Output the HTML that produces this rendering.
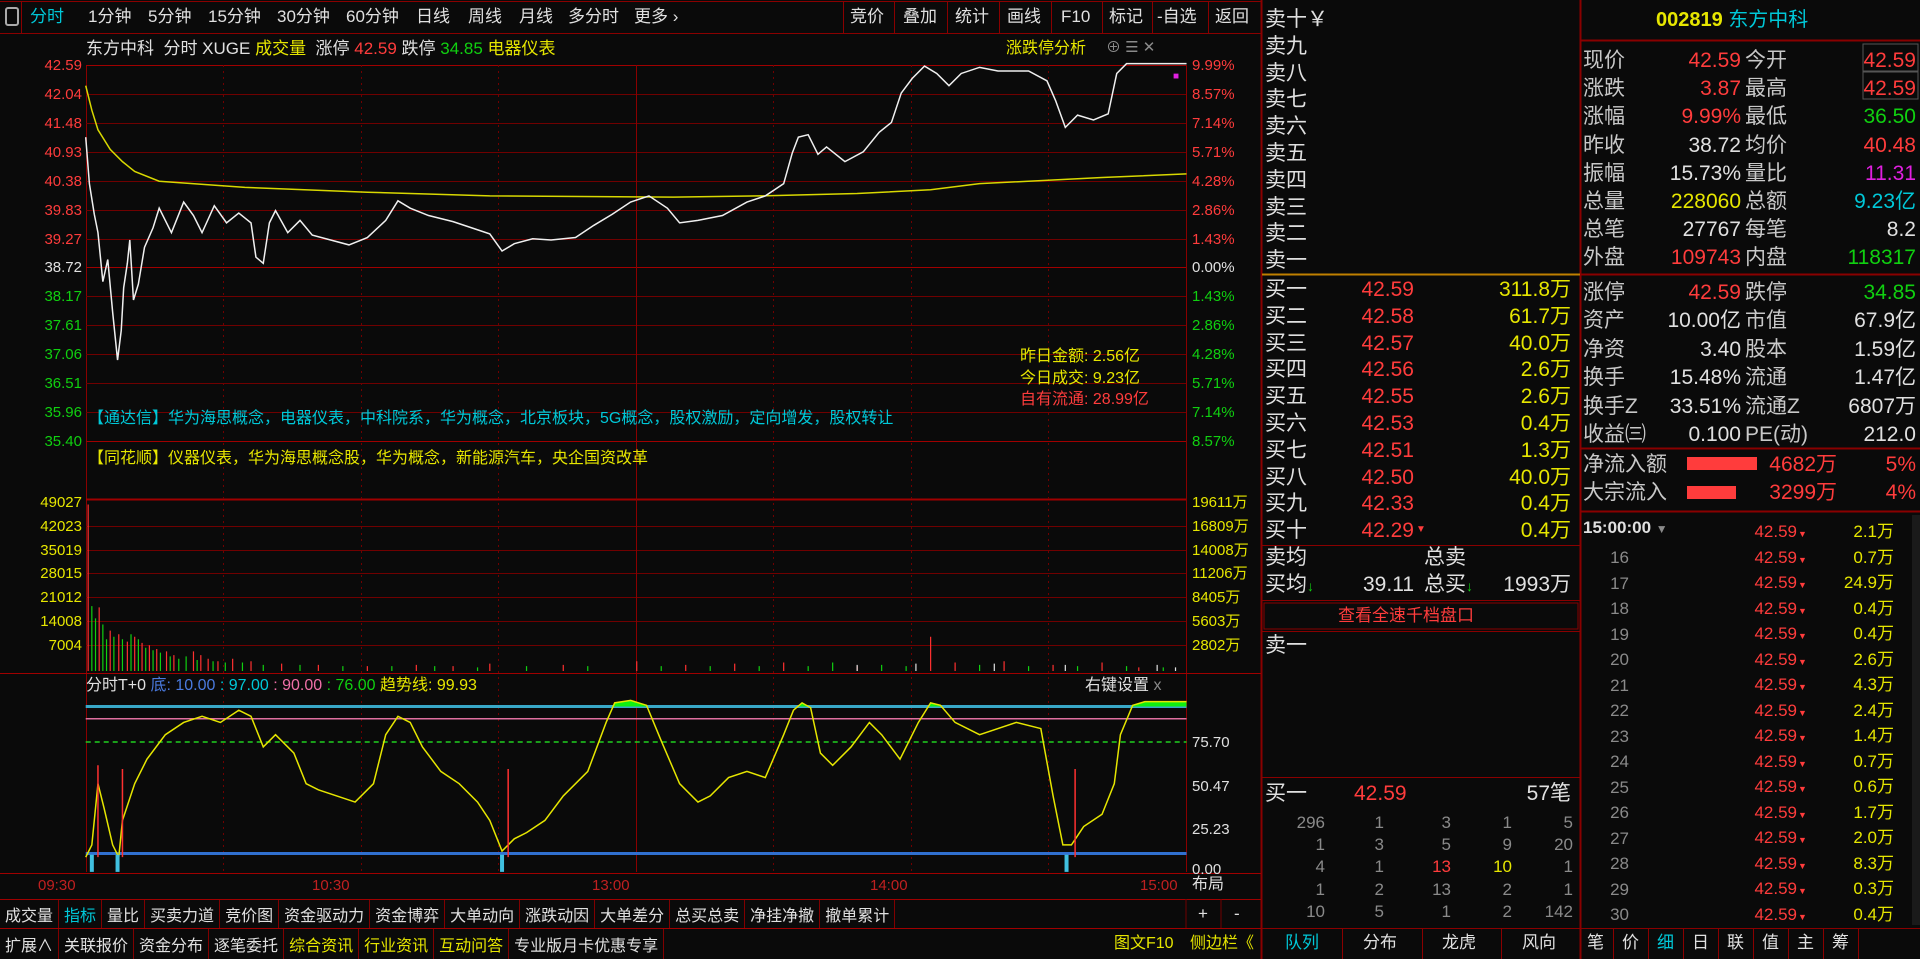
<!DOCTYPE html>
<html><head><meta charset="utf-8"><style>
*{margin:0;padding:0;box-sizing:border-box}
body{width:1920px;height:959px;background:#0a0a0a;overflow:hidden;position:relative;font-family:"Liberation Sans","WenQuanYi Zen Hei","Noto Sans CJK SC",sans-serif;color:#d8d8d8}
.a{position:absolute;white-space:nowrap;line-height:1}
.r{color:#ff3c3c}.g{color:#10d010}.y{color:#e6e600}.c{color:#00c8d8}.w{color:#e0e0e0}.gr{color:#8a8a8a}.m{color:#e020e0}
.s15{font-size:15px}.s16{font-size:16px}.s17{font-size:17px}.s21{font-size:21px}
.bar{position:absolute;display:flex;font-size:16px}
.bar div{border-right:1px solid #800000;padding:0 5px;height:100%;display:flex;align-items:center}
</style></head><body>

<svg class="a" style="left:0;top:0" width="1920" height="959">
<rect x="0" y="0" width="1261" height="33" fill="#0a0a0a"/>
<line x1="0" y1="33.5" x2="1261" y2="33.5" stroke="#8a0000"/>
<line x1="0" y1="1.5" x2="1261" y2="1.5" stroke="#8a0000"/>
<rect x="6" y="8" width="12" height="17" rx="2" fill="none" stroke="#aaa" stroke-width="2"/>
<line x1="21.5" y1="2" x2="21.5" y2="33" stroke="#8a0000"/>
<line x1="843.5" y1="2" x2="843.5" y2="33" stroke="#8a0000"/>
<line x1="894.5" y1="2" x2="894.5" y2="33" stroke="#8a0000"/>
<line x1="947.5" y1="2" x2="947.5" y2="33" stroke="#8a0000"/>
<line x1="999.5" y1="2" x2="999.5" y2="33" stroke="#8a0000"/>
<line x1="1051.5" y1="2" x2="1051.5" y2="33" stroke="#8a0000"/>
<line x1="1102.5" y1="2" x2="1102.5" y2="33" stroke="#8a0000"/>
<line x1="1152.5" y1="2" x2="1152.5" y2="33" stroke="#8a0000"/>
<line x1="1208.5" y1="2" x2="1208.5" y2="33" stroke="#8a0000"/>
<line x1="1261.5" y1="0" x2="1261.5" y2="959" stroke="#8a0000" stroke-width="2"/>
<line x1="1580.5" y1="0" x2="1580.5" y2="959" stroke="#8a0000" stroke-width="2"/>
<line x1="86.5" y1="65" x2="86.5" y2="872" stroke="#8a0000"/>
<line x1="1186.5" y1="65" x2="1186.5" y2="872" stroke="#8a0000"/>
<g stroke="#700000" stroke-width="1">
<line x1="86" y1="65.5" x2="1186" y2="65.5" stroke="#a00000"/>
<line x1="86" y1="94.5" x2="1186" y2="94.5"/><line x1="86" y1="123.5" x2="1186" y2="123.5"/>
<line x1="86" y1="152.5" x2="1186" y2="152.5"/><line x1="86" y1="181.5" x2="1186" y2="181.5"/>
<line x1="86" y1="210.5" x2="1186" y2="210.5"/><line x1="86" y1="239.5" x2="1186" y2="239.5"/>
<line x1="86" y1="267.5" x2="1186" y2="267.5" stroke="#a00000"/>
<line x1="86" y1="296.5" x2="1186" y2="296.5"/><line x1="86" y1="325.5" x2="1186" y2="325.5"/>
<line x1="86" y1="354.5" x2="1186" y2="354.5"/><line x1="86" y1="383.5" x2="1186" y2="383.5"/>
<line x1="86" y1="412.5" x2="1186" y2="412.5"/><line x1="86" y1="441.5" x2="1186" y2="441.5" stroke="#a00000"/>
<line x1="86" y1="499.5" x2="1186" y2="499.5" stroke="#a00000" stroke-width="2"/>
<line x1="86" y1="526.5" x2="1186" y2="526.5"/><line x1="86" y1="550.5" x2="1186" y2="550.5"/>
<line x1="86" y1="573.5" x2="1186" y2="573.5"/><line x1="86" y1="597.5" x2="1186" y2="597.5"/>
<line x1="86" y1="621.5" x2="1186" y2="621.5"/><line x1="86" y1="645.5" x2="1186" y2="645.5"/>
<line x1="0" y1="673.5" x2="1261" y2="673.5" stroke="#a00000"/>
<line x1="0" y1="873.5" x2="1261" y2="873.5" stroke="#a00000"/>
<line x1="0" y1="899.5" x2="1261" y2="899.5" stroke="#a00000"/>
<line x1="0" y1="928.5" x2="1261" y2="928.5" stroke="#a00000"/>
<line x1="1186" y1="899" x2="1186" y2="928"/>
<line x1="1221" y1="899" x2="1221" y2="928"/>
</g>
<g stroke="#700000" stroke-dasharray="2,4">
<line x1="223.5" y1="65" x2="223.5" y2="872"/><line x1="361.5" y1="65" x2="361.5" y2="872"/>
<line x1="498.5" y1="65" x2="498.5" y2="872"/><line x1="773.5" y1="65" x2="773.5" y2="872"/>
<line x1="911.5" y1="65" x2="911.5" y2="872"/><line x1="1048.5" y1="65" x2="1048.5" y2="872"/>
</g>
<line x1="636.5" y1="65" x2="636.5" y2="872" stroke="#8a0000"/>

<g transform="scale(1.2245)" fill="none">
<polyline vector-effect="non-scaling-stroke" stroke="#d8d800" stroke-width="1.5" points="70,70 75,90 80,106 90,122 100,132 110,140 130,148 200,153 300,157 400,160 550,161 620,160 700,158 760,155 800,150 900,145 969,142"/>
<polyline vector-effect="non-scaling-stroke" stroke="#f0f0f0" stroke-width="1.5" points="70,112 73,150 77,175 80,190 84,230 88,212 92,255 96,294 99,270 101,235 104,215 106,196 109,245 113,232 118,202 125,186 130,170 140,190 150,165 158,176 165,190 175,168 185,182 195,174 205,182 209,210 215,215 220,182 225,172 235,190 245,180 255,192 270,196 285,200 300,194 315,180 325,164 335,170 350,176 370,181 385,186 400,191 410,205 420,199 435,195 450,196 470,194 485,184 500,175 515,165 530,160 545,170 555,182 570,180 590,176 610,165 625,160 640,150 647,125 652,112 660,110 668,126 675,120 690,132 705,124 718,108 728,100 736,76 745,64 755,54 765,60 775,70 785,60 800,55 815,58 840,58 855,66 862,82 870,104 880,94 893,98 905,93 912,60 920,52 969,52"/>
<path vector-effect="non-scaling-stroke" stroke="#ff3030" stroke-width="1.2" d="M72 548V412M81 548V496M90 548V515M97 548V518M104 548V524M110 548V520M116 548V525M122 548V527M128 548V530M136 548V532M142 548V535M158 548V532M164 548V535M170 548V538M178 548V540M190 548V538M205 548V540M230 548V542M260 548V543M300 548V544M340 548V543M370 548V544M400 548V542M460 548V543M520 548V540M560 548V543M600 548V542M640 548V541M700 548V544M760 548V520M780 548V541M820 548V540M860 548V543M900 548V541M930 548V545"/>
<path vector-effect="non-scaling-stroke" stroke="#10d010" stroke-width="1.2" d="M75 548V495M78 548V505M84 548V510M87 548V522M93 548V520M100 548V522M107 548V518M113 548V522M119 548V529M125 548V531M131 548V533M139 548V536M146 548V538M152 548V536M161 548V539M174 548V540M184 548V541M198 548V541M215 548V543M245 548V543M280 548V544M320 548V544M355 548V544M390 548V545M430 548V544M480 548V544M540 548V544M580 548V544M620 548V544M660 548V544M680 548V541M720 548V543M740 548V544M800 548V543M840 548V544M880 548V544M920 548V544M950 548V545"/>
<path vector-effect="non-scaling-stroke" stroke="#e0e0e0" stroke-width="1.2" d="M700 548V543M748 548V542M812 548V542M870 548V543M945 548V543M960 548V545"/>
<line vector-effect="non-scaling-stroke" x1="70" y1="577" x2="969" y2="577" stroke="#38a8c8" stroke-width="3"/>
<line vector-effect="non-scaling-stroke" x1="70" y1="587" x2="969" y2="587" stroke="#e070a0" stroke-width="1.5"/>
<line vector-effect="non-scaling-stroke" x1="70" y1="606" x2="969" y2="606" stroke="#20d020" stroke-width="1.5" stroke-dasharray="5,4"/>
<line vector-effect="non-scaling-stroke" x1="70" y1="697" x2="969" y2="697" stroke="#3070d0" stroke-width="3"/>
<clipPath id="cp"><rect x="60" y="560" width="920" height="17"/></clipPath>
<polygon clip-path="url(#cp)" fill="#10f010" points="70,700 75,690 80,640 85,660 92,690 97,700 100,670 110,640 120,620 135,600 150,590 165,585 180,590 195,580 205,585 215,610 225,600 240,615 250,640 260,645 275,650 290,655 305,640 315,600 325,585 335,590 345,610 360,630 375,640 390,655 400,670 410,695 420,685 430,680 445,670 460,650 480,630 495,590 502,574 515,572 528,576 540,605 555,640 570,655 580,650 595,635 610,630 625,635 640,600 648,580 655,574 662,578 670,615 680,625 695,610 710,590 720,600 735,620 750,590 760,574 768,576 780,590 800,600 830,590 850,595 860,650 868,690 875,690 885,675 900,665 910,640 915,600 925,576 935,573 969,573 969,700"/>
<polyline vector-effect="non-scaling-stroke" stroke="#e6e600" stroke-width="1.5" points="70,700 75,690 80,640 85,660 92,690 97,700 100,670 110,640 120,620 135,600 150,590 165,585 180,590 195,580 205,585 215,610 225,600 240,615 250,640 260,645 275,650 290,655 305,640 315,600 325,585 335,590 345,610 360,630 375,640 390,655 400,670 410,695 420,685 430,680 445,670 460,650 480,630 495,590 502,574 515,572 528,576 540,605 555,640 570,655 580,650 595,635 610,630 625,635 640,600 648,580 655,574 662,578 670,615 680,625 695,610 710,590 720,600 735,620 750,590 760,574 768,576 780,590 800,600 830,590 850,595 860,650 868,690 875,690 885,675 900,665 910,640 915,600 925,576 935,573 969,573"/>
<path vector-effect="non-scaling-stroke" stroke="#ff3030" stroke-width="1.5" d="M80 700V625M100 700V628M415 700V628M878 700V628"/>
<path vector-effect="non-scaling-stroke" stroke="#40c0e0" stroke-width="4" d="M75 712V698M96 712V698M410 712V698M871 712V698"/>
</g>

<line x1="1262" y1="274.5" x2="1580" y2="274.5" stroke="#c08000" stroke-width="2"/>
<line x1="1262" y1="545.5" x2="1580" y2="545.5" stroke="#8a0000"/>
<line x1="1262" y1="600.5" x2="1580" y2="600.5" stroke="#8a0000"/>
<rect x="1264" y="603" width="314" height="26" fill="none" stroke="#8a0000"/>
<line x1="1262" y1="631.5" x2="1580" y2="631.5" stroke="#8a0000"/>
<line x1="1262" y1="777.5" x2="1580" y2="777.5" stroke="#8a0000"/>
<line x1="1262" y1="928.5" x2="1920" y2="928.5" stroke="#8a0000"/>
<line x1="1342.5" y1="929" x2="1342.5" y2="959" stroke="#8a0000"/>
<line x1="1422.5" y1="929" x2="1422.5" y2="959" stroke="#8a0000"/>
<line x1="1501.5" y1="929" x2="1501.5" y2="959" stroke="#8a0000"/>
<line x1="1581" y1="40.5" x2="1920" y2="40.5" stroke="#8a0000" stroke-width="2"/>
<line x1="1581" y1="274.5" x2="1920" y2="274.5" stroke="#8a0000" stroke-width="2"/>
<line x1="1581" y1="448.5" x2="1920" y2="448.5" stroke="#8a0000" stroke-width="2"/>
<line x1="1581" y1="511.5" x2="1920" y2="511.5" stroke="#8a0000" stroke-width="2"/>
<rect x="1863" y="44" width="55" height="27" fill="none" stroke="#555"/>
<rect x="1863" y="72" width="55" height="27" fill="none" stroke="#555"/>
<rect x="1687" y="457" width="70" height="13" fill="#ff3c3c"/>
<rect x="1687" y="486" width="49" height="13" fill="#ff3c3c"/>
<rect x="1912" y="515" width="8" height="410" fill="#1a1a1a"/>
<g stroke="#8a0000"><line x1="1613.5" y1="929" x2="1613.5" y2="959"/><line x1="1648.5" y1="929" x2="1648.5" y2="959"/><line x1="1683.5" y1="929" x2="1683.5" y2="959"/><line x1="1718.5" y1="929" x2="1718.5" y2="959"/><line x1="1753.5" y1="929" x2="1753.5" y2="959"/><line x1="1788.5" y1="929" x2="1788.5" y2="959"/><line x1="1823.5" y1="929" x2="1823.5" y2="959"/><line x1="1858.5" y1="929" x2="1858.5" y2="959"/></g>
</svg>

<div class="a s17 c" style="left:30px;top:8px">分时</div>
<div class="a s17 w" style="left:88px;top:8px">1分钟</div>
<div class="a s17 w" style="left:148px;top:8px">5分钟</div>
<div class="a s17 w" style="left:208px;top:8px">15分钟</div>
<div class="a s17 w" style="left:277px;top:8px">30分钟</div>
<div class="a s17 w" style="left:346px;top:8px">60分钟</div>
<div class="a s17 w" style="left:416px;top:8px">日线</div>
<div class="a s17 w" style="left:468px;top:8px">周线</div>
<div class="a s17 w" style="left:519px;top:8px">月线</div>
<div class="a s17 w" style="left:568px;top:8px">多分时</div>
<div class="a s17 w" style="left:634px;top:8px">更多 ›</div>
<div class="a s17 w" style="left:850px;top:8px">竞价</div>
<div class="a s17 w" style="left:903px;top:8px">叠加</div>
<div class="a s17 w" style="left:955px;top:8px">统计</div>
<div class="a s17 w" style="left:1007px;top:8px">画线</div>
<div class="a s17 w" style="left:1061px;top:8px">F10</div>
<div class="a s17 w" style="left:1109px;top:8px">标记</div>
<div class="a s17 w" style="left:1157px;top:8px">-自选</div>
<div class="a s17 w" style="left:1215px;top:8px">返回</div>

<div class="a s17" style="left:86px;top:40px"><span class="w">东方中科 &nbsp;分时 XUGE </span><span class="y">成交量</span><span class="w"> &nbsp;涨停 </span><span class="r">42.59</span><span class="w"> 跌停 </span><span class="g">34.85</span><span class="y"> 电器仪表</span></div>
<div class="a s16 y" style="left:1006px;top:41px">涨跌停分析</div>
<div class="a s15 gr" style="left:1106px;top:40px">⊕ ☰ ✕</div>

<div class="a s15 r" style="right:1838px;top:58px">42.59</div>
<div class="a s15 r" style="right:1838px;top:87px">42.04</div>
<div class="a s15 r" style="right:1838px;top:116px">41.48</div>
<div class="a s15 r" style="right:1838px;top:145px">40.93</div>
<div class="a s15 r" style="right:1838px;top:174px">40.38</div>
<div class="a s15 r" style="right:1838px;top:203px">39.83</div>
<div class="a s15 r" style="right:1838px;top:232px">39.27</div>
<div class="a s15 w" style="right:1838px;top:260px">38.72</div>
<div class="a s15 g" style="right:1838px;top:289px">38.17</div>
<div class="a s15 g" style="right:1838px;top:318px">37.61</div>
<div class="a s15 g" style="right:1838px;top:347px">37.06</div>
<div class="a s15 g" style="right:1838px;top:376px">36.51</div>
<div class="a s15 g" style="right:1838px;top:405px">35.96</div>
<div class="a s15 g" style="right:1838px;top:434px">35.40</div>
<div class="a s15 r" style="left:1192px;top:58px">9.99%</div>
<div class="a s15 r" style="left:1192px;top:87px">8.57%</div>
<div class="a s15 r" style="left:1192px;top:116px">7.14%</div>
<div class="a s15 r" style="left:1192px;top:145px">5.71%</div>
<div class="a s15 r" style="left:1192px;top:174px">4.28%</div>
<div class="a s15 r" style="left:1192px;top:203px">2.86%</div>
<div class="a s15 r" style="left:1192px;top:232px">1.43%</div>
<div class="a s15 w" style="left:1192px;top:260px">0.00%</div>
<div class="a s15 g" style="left:1192px;top:289px">1.43%</div>
<div class="a s15 g" style="left:1192px;top:318px">2.86%</div>
<div class="a s15 g" style="left:1192px;top:347px">4.28%</div>
<div class="a s15 g" style="left:1192px;top:376px">5.71%</div>
<div class="a s15 g" style="left:1192px;top:405px">7.14%</div>
<div class="a s15 g" style="left:1192px;top:434px">8.57%</div>
<div class="a m" style="left:1173px;top:72px;font-size:10px">■</div>

<div class="a s16 y" style="left:1020px;top:349px">昨日金额: 2.56亿</div>
<div class="a s16 y" style="left:1020px;top:371px">今日成交: 9.23亿</div>
<div class="a s16 r" style="left:1020px;top:392px">自有流通: 28.99亿</div>
<div class="a s16 c" style="left:88px;top:411px">【通达信】华为海思概念，电器仪表，中科院系，华为概念，北京板块，5G概念，股权激励，定向增发，股权转让</div>
<div class="a s16 y" style="left:88px;top:451px">【同花顺】仪器仪表，华为海思概念股，华为概念，新能源汽车，央企国资改革</div>

<div class="a s15 y" style="right:1838px;top:495px">49027</div>
<div class="a s15 y" style="right:1838px;top:519px">42023</div>
<div class="a s15 y" style="right:1838px;top:543px">35019</div>
<div class="a s15 y" style="right:1838px;top:566px">28015</div>
<div class="a s15 y" style="right:1838px;top:590px">21012</div>
<div class="a s15 y" style="right:1838px;top:614px">14008</div>
<div class="a s15 y" style="right:1838px;top:638px">7004</div>
<div class="a s15 y" style="left:1192px;top:495px">19611万</div>
<div class="a s15 y" style="left:1192px;top:519px">16809万</div>
<div class="a s15 y" style="left:1192px;top:543px">14008万</div>
<div class="a s15 y" style="left:1192px;top:566px">11206万</div>
<div class="a s15 y" style="left:1192px;top:590px">8405万</div>
<div class="a s15 y" style="left:1192px;top:614px">5603万</div>
<div class="a s15 y" style="left:1192px;top:638px">2802万</div>

<div class="a s16" style="left:86px;top:678px"><span class="w">分时T+0 </span><span style="color:#4a7adf">底: 10.00</span><span class="c"> : 97.00 </span><span style="color:#f070a8">: 90.00 </span><span class="g">: 76.00 </span><span class="y"> 趋势线: 99.93</span></div>
<div class="a s16 w" style="left:1085px;top:678px">右键设置 <span class="gr">x</span></div>
<div class="a s15 w" style="left:1192px;top:735px">75.70</div>
<div class="a s15 w" style="left:1192px;top:779px">50.47</div>
<div class="a s15 w" style="left:1192px;top:822px">25.23</div>
<div class="a s15 w" style="left:1192px;top:862px">0.00</div>
<div class="a s15" style="left:38px;top:878px;color:#c02020">09:30</div>
<div class="a s15" style="left:312px;top:878px;color:#c02020">10:30</div>
<div class="a s15" style="left:592px;top:878px;color:#c02020">13:00</div>
<div class="a s15" style="left:870px;top:878px;color:#c02020">14:00</div>
<div class="a s15" style="left:1140px;top:878px;color:#c02020">15:00</div>
<div class="a s16 w" style="left:1192px;top:877px">布局</div>

<div class="bar w" style="left:0;top:900px;height:28px">
<div>成交量</div><div class="c">指标</div><div>量比</div><div>买卖力道</div><div>竞价图</div><div>资金驱动力</div><div>资金博弈</div><div>大单动向</div><div>涨跌动因</div><div>大单差分</div><div>总买总卖</div><div>净挂净撤</div><div>撤单累计</div></div>
<div class="a s17 w" style="left:1198px;top:905px">+</div>
<div class="a s17 w" style="left:1234px;top:905px">-</div>
<div class="bar w" style="left:0;top:929px;height:30px">
<div>扩展∧</div><div>关联报价</div><div>资金分布</div><div>逐笔委托</div><div class="y">综合资讯</div><div class="y">行业资讯</div><div class="y">互动问答</div><div>专业版月卡优惠专享</div></div>
<div class="a s16 y" style="left:1114px;top:936px">图文F10</div>
<div class="a s16 y" style="left:1190px;top:936px">侧边栏《</div>

<div class="a s21 w" style="left:1265px;top:7px;line-height:26.8px">卖十￥<br>卖九<br>卖八<br>卖七<br>卖六<br>卖五<br>卖四<br>卖三<br>卖二<br>卖一</div>
<div class="a s21 w" style="left:1265px;top:277px;line-height:26.8px">买一<br>买二<br>买三<br>买四<br>买五<br>买六<br>买七<br>买八<br>买九<br>买十</div>
<div class="a s21 r" style="right:506px;top:277px;line-height:26.8px;text-align:right">42.59<br>42.58<br>42.57<br>42.56<br>42.55<br>42.53<br>42.51<br>42.50<br>42.33<br>42.29</div>
<div class="a r" style="left:1416px;top:525px;font-size:10px">▼</div>
<div class="a s21 y" style="right:349px;top:277px;line-height:26.8px;text-align:right">311.8万<br>61.7万<br>40.0万<br>2.6万<br>2.6万<br>0.4万<br>1.3万<br>40.0万<br>0.4万<br>0.4万</div>
<div class="a s21 w" style="left:1265px;top:547px">卖均</div>
<div class="a s21 w" style="left:1424px;top:547px">总卖</div>
<div class="a s21 w" style="left:1265px;top:574px">买均<span class="g" style="font-size:14px">↓</span></div>
<div class="a s21 w" style="right:506px;top:574px">39.11</div>
<div class="a s21 w" style="left:1424px;top:574px">总买<span class="g" style="font-size:14px">↓</span></div>
<div class="a s21 w" style="right:349px;top:574px">1993万</div>
<div class="a s17 r" style="left:1338px;top:607px">查看全速千档盘口</div>
<div class="a s21 w" style="left:1265px;top:635px">卖一</div>
<div class="a s21 w" style="left:1265px;top:783px">买一</div>
<div class="a s21 r" style="left:1354px;top:783px">42.59</div>
<div class="a s21 w" style="right:349px;top:783px">57笔</div>
<div class="a s17 gr" style="right:595px;top:812px;line-height:22.2px;text-align:right">296<br>1<br>4<br>1<br>10</div>
<div class="a s17 gr" style="right:536px;top:812px;line-height:22.2px;text-align:right">1<br>3<br>1<br>2<br>5</div>
<div class="a s17 gr" style="right:469px;top:812px;line-height:22.2px;text-align:right">3<br>5<br><span class="r">13</span><br>13<br>1</div>
<div class="a s17 gr" style="right:408px;top:812px;line-height:22.2px;text-align:right">1<br>9<br><span class="y">10</span><br>2<br>2</div>
<div class="a s17 gr" style="right:347px;top:812px;line-height:22.2px;text-align:right">5<br>20<br>1<br>1<br>142</div>
<div class="a s17 c" style="left:1285px;top:934px">队列</div>
<div class="a s17 w" style="left:1363px;top:934px">分布</div>
<div class="a s17 w" style="left:1442px;top:934px">龙虎</div>
<div class="a s17 w" style="left:1522px;top:934px">风向</div>

<div class="a" style="left:1656px;top:10px;font-size:20px"><span class="y" style="font-weight:bold">002819</span> <span class="c">东方中科</span></div>
<div class="a s21" style="left:1583px;top:47px;line-height:28.2px;color:#c8c8c8">现价<br>涨跌<br>涨幅<br>昨收<br>振幅<br>总量<br>总笔<br>外盘</div>
<div class="a s21" style="right:179px;top:47px;line-height:28.2px;text-align:right"><span class="r">42.59</span><br><span class="r">3.87</span><br><span class="r">9.99%</span><br><span class="w">38.72</span><br><span class="w">15.73%</span><br><span class="y">228060</span><br><span class="w">27767</span><br><span class="r">109743</span></div>
<div class="a s21" style="left:1745px;top:47px;line-height:28.2px;color:#c8c8c8">今开<br>最高<br>最低<br>均价<br>量比<br>总额<br>每笔<br>内盘</div>
<div class="a s21" style="right:4px;top:47px;line-height:28.2px;text-align:right"><span class="r">42.59</span><br><span class="r">42.59</span><br><span class="g">36.50</span><br><span class="r">40.48</span><br><span class="m">11.31</span><br><span class="c">9.23亿</span><br><span class="w">8.2</span><br><span class="g">118317</span></div>
<div class="a s21" style="left:1583px;top:279px;line-height:28.4px;color:#c8c8c8">涨停<br>资产<br>净资<br>换手<br>换手Z<br>收益㈢</div>
<div class="a s21" style="right:179px;top:279px;line-height:28.4px;text-align:right"><span class="r">42.59</span><br><span class="w">10.00亿</span><br><span class="w">3.40</span><br><span class="w">15.48%</span><br><span class="w">33.51%</span><br><span class="w">0.100</span></div>
<div class="a s21" style="left:1745px;top:279px;line-height:28.4px;color:#c8c8c8">跌停<br>市值<br>股本<br>流通<br>流通Z<br>PE(动)</div>
<div class="a s21" style="right:4px;top:279px;line-height:28.4px;text-align:right"><span class="g">34.85</span><br><span class="w">67.9亿</span><br><span class="w">1.59亿</span><br><span class="w">1.47亿</span><br><span class="w">6807万</span><br><span class="w">212.0</span></div>
<div class="a s21" style="left:1583px;top:454px;color:#c8c8c8">净流入额</div>
<div class="a s21" style="left:1583px;top:482px;color:#c8c8c8">大宗流入</div>
<div class="a s21 r" style="right:83px;top:454px">4682万</div>
<div class="a s21 r" style="right:83px;top:482px">3299万</div>
<div class="a s21 r" style="right:4px;top:454px">5%</div>
<div class="a s21 r" style="right:4px;top:482px">4%</div>
<div class="a s17 w" style="left:1583px;top:519px;font-weight:bold">15:00:00 <span class="gr" style="font-size:12px">▼</span></div>
<div class="a s17 gr" style="right:291px;top:545px;line-height:25.5px;text-align:right">16<br>17<br>18<br>19<br>20<br>21<br>22<br>23<br>24<br>25<br>26<br>27<br>28<br>29<br>30</div>
<div class="a s17 r" style="right:123px;top:519px;line-height:25.5px;text-align:right">42.59<br>42.59<br>42.59<br>42.59<br>42.59<br>42.59<br>42.59<br>42.59<br>42.59<br>42.59<br>42.59<br>42.59<br>42.59<br>42.59<br>42.59<br>42.59</div>
<div class="a r" style="left:1798px;top:522px;line-height:25.5px;font-size:9px">▼<br>▼<br>▼<br>▼<br>▼<br>▼<br>▼<br>▼<br>▼<br>▼<br>▼<br>▼<br>▼<br>▼<br>▼<br>▼</div>
<div class="a s17 y" style="right:26px;top:519px;line-height:25.5px;text-align:right">2.1万<br>0.7万<br>24.9万<br>0.4万<br>0.4万<br>2.6万<br>4.3万<br>2.4万<br>1.4万<br>0.7万<br>0.6万<br>1.7万<br>2.0万<br>8.3万<br>0.3万<br>0.4万</div>
<div class="a s17 w" style="left:1587px;top:934px">笔</div>
<div class="a s17 w" style="left:1622px;top:934px">价</div>
<div class="a s17 c" style="left:1657px;top:934px">细</div>
<div class="a s17 w" style="left:1692px;top:934px">日</div>
<div class="a s17 w" style="left:1727px;top:934px">联</div>
<div class="a s17 w" style="left:1762px;top:934px">值</div>
<div class="a s17 w" style="left:1797px;top:934px">主</div>
<div class="a s17 w" style="left:1832px;top:934px">筹</div>
</body></html>
